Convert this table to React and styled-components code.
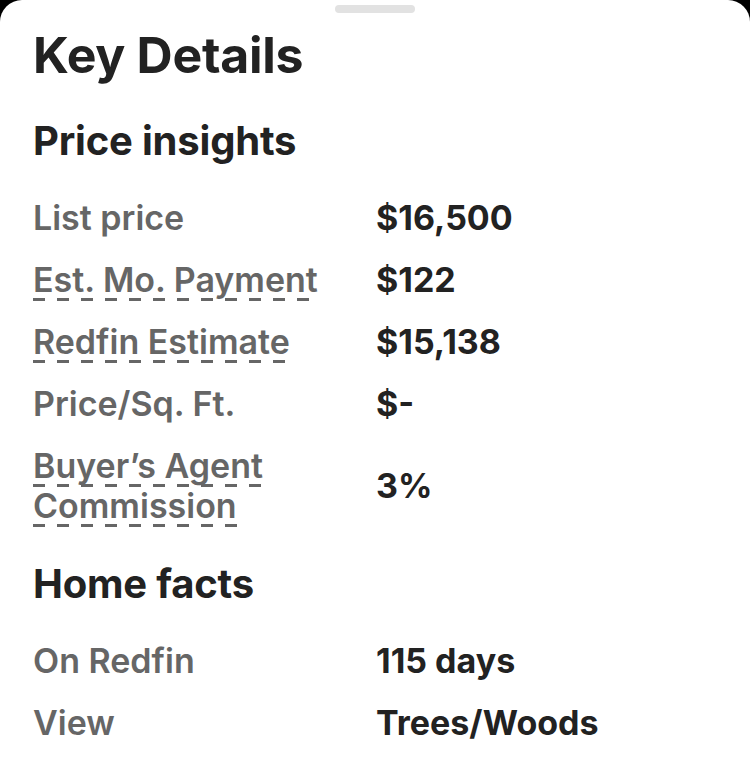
import React from 'react';
import styled, { createGlobalStyle } from 'styled-components';

const GlobalStyle = createGlobalStyle`
  html, body {
    margin: 0;
    padding: 0;
    background: #000000;
  }
  body {
    font-family: Inter, "Noto Sans", "Liberation Sans", sans-serif;
    -webkit-font-smoothing: antialiased;
  }
`;

const Sheet = styled.div`
  min-height: 757px;
  box-sizing: border-box;
  background: #ffffff;
  border-radius: 22px 22px 0 0;
  padding: 5px 33px 20px;
  display: flex;
  flex-direction: column;
`;

const Handle = styled.div`
  align-self: center;
  width: 80px;
  height: 8px;
  border-radius: 4px;
  background: #e2e2e2;
`;

const Title = styled.h1`
  margin: 14px 0 0;
  font-size: 50px;
  line-height: 56px;
  font-weight: 700;
  letter-spacing: -0.3px;
  color: #222222;
`;

const SectionTitle = styled.h2`
  margin: ${p => p.$gap}px 0 0;
  font-size: 40px;
  line-height: 48px;
  font-weight: 700;
  letter-spacing: -0.2px;
  color: #222222;
`;

const Table = styled.div`
  margin-top: 22px;
  display: grid;
  grid-template-columns: 343px 1fr;
`;

const Label = styled.div`
  padding: 11px 0;
  font-size: 34px;
  line-height: 40px;
  font-weight: 600;
  color: #666666;
`;

const Dashed = styled.span`
  padding-bottom: 1px;
  background-image: linear-gradient(to right, #666666 12px, transparent 12px);
  background-size: 24px 3px;
  background-repeat: repeat-x;
  background-position: 0 100%;
  -webkit-box-decoration-break: clone;
  box-decoration-break: clone;
`;

const Value = styled.div`
  display: flex;
  align-items: center;
  font-size: 34px;
  line-height: 40px;
  font-weight: 700;
  color: #222222;
`;

const priceRows = [
  { label: 'List price', value: '$16,500' },
  { label: 'Est. Mo. Payment', value: '$122', tip: true },
  { label: 'Redfin Estimate', value: '$15,138', tip: true },
  { label: 'Price/Sq. Ft.', value: '$-' },
  { label: 'Buyer’s Agent Commission', value: '3%', tip: true },
];

const factRows = [
  { label: 'On Redfin', value: '115 days' },
  { label: 'View', value: 'Trees/Woods' },
];

const Rows = ({ rows }) => (
  <Table>
    {rows.map(row => (
      <React.Fragment key={row.label}>
        <Label>{row.tip ? <Dashed>{row.label}</Dashed> : row.label}</Label>
        <Value>{row.value}</Value>
      </React.Fragment>
    ))}
  </Table>
);

const App = () => (
  <>
    <GlobalStyle />
    <Sheet>
      <Handle />
      <Title>Key Details</Title>
      <SectionTitle $gap={34}>Price insights</SectionTitle>
      <Rows rows={priceRows} />
      <SectionTitle $gap={23}>Home facts</SectionTitle>
      <Rows rows={factRows} />
    </Sheet>
  </>
);

export default App;
